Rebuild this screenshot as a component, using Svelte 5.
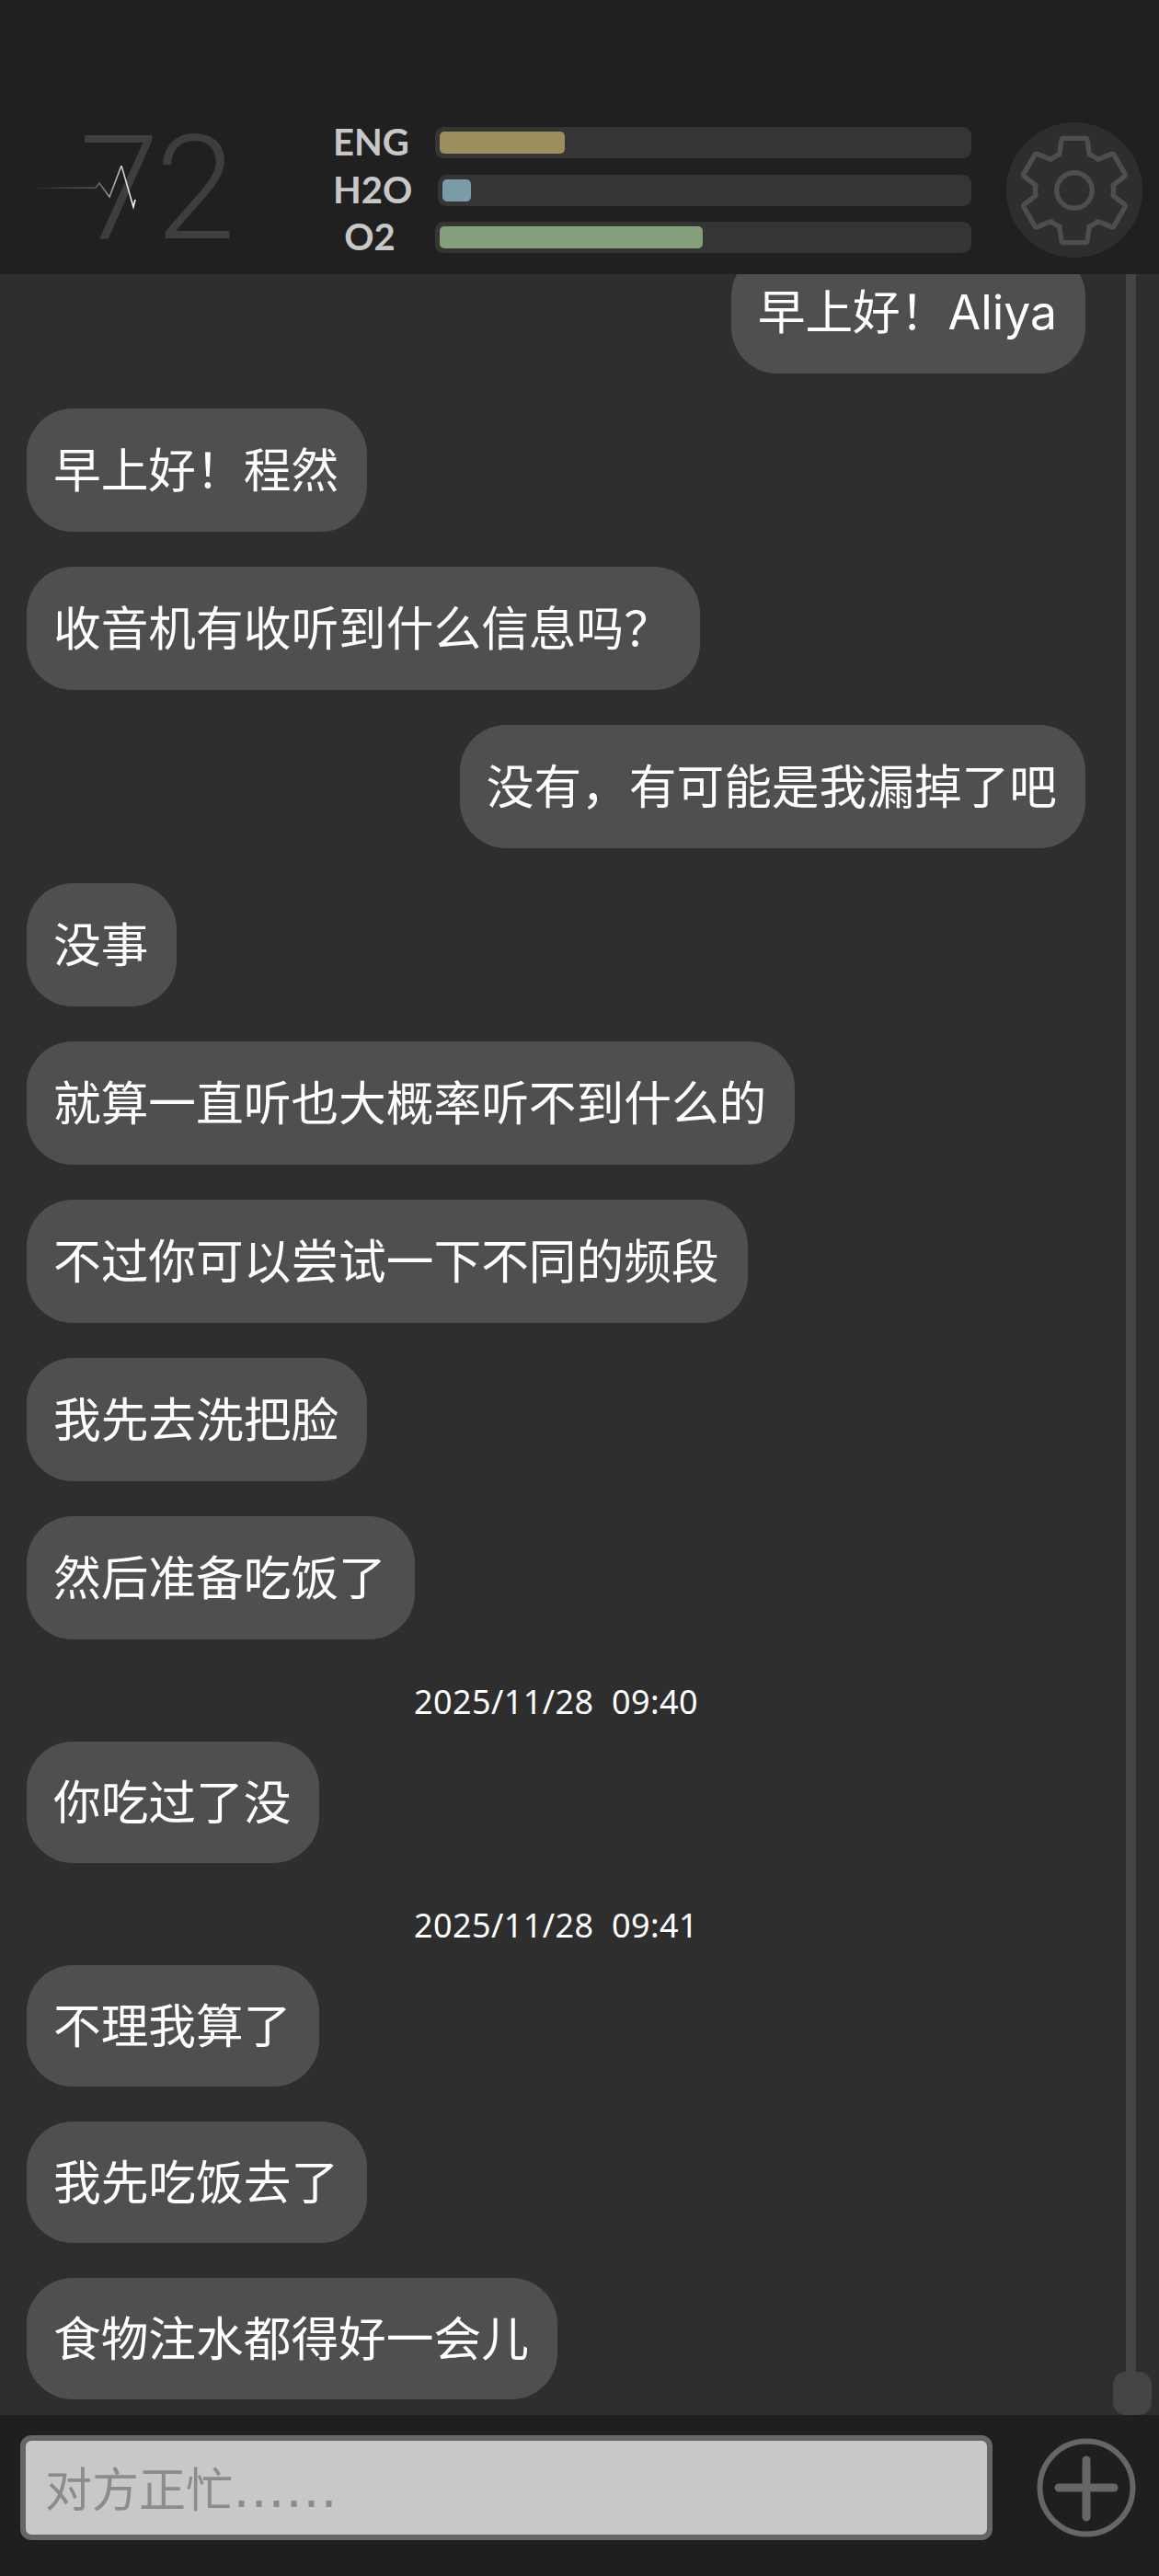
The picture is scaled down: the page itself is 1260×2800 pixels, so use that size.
<script>
  const stats = [
    { label: "ENG", value: 136, color: "#9c8d5c", mod: "" },
    { label: "H2O", value: 31, color: "#7a9ca8", mod: "water" },
    { label: "O2", value: 286, color: "#84a07a", mod: "" },
  ];

  const messages = [
    { text: "早上好！Aliya", mine: true },
    { text: "早上好！程然" },
    { text: "收音机有收听到什么信息吗？" },
    { text: "没有，有可能是我漏掉了吧", mine: true },
    { text: "没事" },
    { text: "就算一直听也大概率听不到什么的" },
    { text: "不过你可以尝试一下不同的频段" },
    { text: "我先去洗把脸" },
    { text: "然后准备吃饭了" },
    { time: "2025/11/28  09:40" },
    { text: "你吃过了没", late: true },
    { time: "2025/11/28  09:41" },
    { text: "不理我算了", late: true },
    { text: "我先吃饭去了", late: true },
    { text: "食物注水都得好一会儿", late: true },
  ];
</script>

<div class="app">
  <header class="top">
    <div class="pulse">
      <span class="rate">72</span>
      <svg class="wave" width="130" height="60" viewBox="0 0 130 60" fill="none">
        <defs>
          <linearGradient id="fade" gradientUnits="userSpaceOnUse" x1="0" y1="0" x2="115" y2="0">
            <stop offset="0" stop-color="#fff" stop-opacity="0" />
            <stop offset="0.65" stop-color="#fff" stop-opacity="0.3" />
            <stop offset="1" stop-color="#fff" />
          </linearGradient>
        </defs>
        <polyline
          points="0,24.5 72,24 76,19 87,34 100,0 113,45 115,37"
          stroke="url(#fade)"
          stroke-width="1.6"
          stroke-linejoin="miter"
        />
      </svg>
    </div>

    <div class="stats">
      {#each stats as s}
        <div class="stat {s.mod}">
          <span class="label">{s.label}</span>
          <div class="track">
            <div class="fill" style="width: {s.value}px; background: {s.color}"></div>
          </div>
        </div>
      {/each}
    </div>

    <button class="gear" aria-label="settings">
      <svg width="136" height="136" viewBox="0 0 24 24" fill="none" stroke="#4e4e4e" stroke-width="0.95">
        <path d="M19.43 12.98c.04-.32.07-.64.07-.98 0-.34-.03-.66-.07-.98l2.11-1.65c.19-.15.24-.42.12-.64l-2-3.46c-.12-.22-.39-.3-.61-.22l-2.49 1c-.52-.4-1.08-.73-1.69-.98l-.38-2.65C14.46 2.18 14.25 2 14 2h-4c-.25 0-.46.18-.49.42l-.38 2.65c-.61.25-1.17.59-1.69.98l-2.49-1c-.23-.09-.49 0-.61.22l-2 3.46c-.13.22-.07.49.12.64l2.11 1.65c-.04.32-.07.65-.07.98 0 .33.03.66.07.98l-2.11 1.65c-.19.15-.24.42-.12.64l2 3.46c.12.22.39.3.61.22l2.49-1c.52.4 1.08.73 1.69.98l.38 2.65c.03.24.24.42.49.42h4c.25 0 .46-.18.49-.42l.38-2.65c.61-.25 1.17-.59 1.69-.98l2.49 1c.23.09.49 0 .61-.22l2-3.46c.12-.22.07-.49-.12-.64l-2.11-1.65z" />
        <circle cx="12" cy="12" r="3.4" />
      </svg>
    </button>
  </header>

  <main class="chat">
    <div class="log">
      {#each messages as m}
        {#if m.time}
          <div class="time">{m.time}</div>
        {:else}
          <div class="bubble" class:mine={m.mine} class:late={m.late}>{m.text}</div>
        {/if}
      {/each}
    </div>
    <div class="rail"></div>
    <div class="thumb"></div>
  </main>

  <footer class="bottom">
    <div class="entry">对方正忙<span class="dots">……</span></div>
    <button class="add" aria-label="add">
      <svg width="108" height="108" viewBox="0 0 108 108" fill="none" stroke="#666" stroke-linecap="round">
        <circle cx="54" cy="54" r="50.5" stroke-width="6" />
        <path d="M54 24v62M24 54h60" stroke-width="9" />
      </svg>
    </button>
  </footer>
</div>

<style>
  :global(body) {
    background: #2e2e2e;
  }

  .app {
    height: 100vh;
    display: flex;
    flex-direction: column;
    font-family: "Inter", "Noto Sans CJK SC", sans-serif;
  }

  button {
    border: none;
    padding: 0;
    background: none;
  }

  /* Top status bar */
  .top {
    flex: none;
    height: 298px;
    box-sizing: border-box;
    padding: 133px 18px 18px 32px;
    background: #202020;
    display: flex;
  }

  .pulse {
    position: relative;
    width: 331px;
    flex: none;
  }

  .rate {
    display: block;
    margin: -23px 0 0 54px;
    font-family: "Roboto", sans-serif;
    font-weight: 350;
    font-size: 157px;
    letter-spacing: -4px;
    line-height: 190px;
    color: #3e3e3e;
  }

  .wave {
    position: absolute;
    left: 0;
    top: 47px;
  }

  .stats {
    flex: none;
    width: 693px;
    padding-top: 5px;
    display: flex;
    flex-direction: column;
    gap: 17.5px;
  }

  .stat {
    display: flex;
    align-items: center;
    height: 34px;
  }

  .label {
    flex: none;
    width: 80px;
    margin-right: 30px;
    position: relative;
    left: -1px;
    top: -1px;
    text-align: center;
    white-space: nowrap;
    font-family: "Lato", sans-serif;
    font-weight: 700;
    font-size: 40px;
    color: #c8c8c8;
  }

  .track {
    flex: 1;
    height: 34px;
    box-sizing: border-box;
    padding: 5px;
    border-radius: 9px;
    background: #353535;
  }

  .fill {
    height: 100%;
    border-radius: 5px;
  }

  .water .label {
    margin-right: 33px;
  }

  .gear {
    flex: none;
    margin-left: 38px;
    width: 148px;
    height: 147px;
    border-radius: 50%;
    background: #2e2e2e;
    display: flex;
    align-items: center;
    justify-content: center;
  }

  /* Messages */
  .chat {
    flex: 1;
    min-height: 0;
    position: relative;
    overflow: hidden;
    background: #2e2e2e;
  }

  .log {
    height: 100%;
    box-sizing: border-box;
    padding: 0 80px 17px 29px;
    display: flex;
    flex-direction: column;
    justify-content: flex-end;
    align-items: flex-start;
    gap: 38px;
  }

  .bubble {
    flex: none;
    box-sizing: border-box;
    height: 134px;
    line-height: 134px;
    padding: 0 31px 0 29px;
    border-radius: 50px;
    background: #4f4f4f;
    color: #fff;
    font-size: 51.7px;
    font-weight: 400;
    white-space: nowrap;
  }

  .bubble.mine {
    align-self: flex-end;
  }

  .bubble.late {
    height: 132px;
    line-height: 132px;
  }

  .time {
    flex: none;
    align-self: center;
    margin: 7px 0 -18px;
    color: #fff;
    font-family: "Noto Sans", sans-serif;
    font-size: 36px;
    letter-spacing: 0.4px;
    line-height: 46px;
    white-space: pre;
  }

  .rail {
    position: absolute;
    left: 1224px;
    top: 0;
    bottom: 0;
    width: 11px;
    background: #444;
  }

  .thumb {
    position: absolute;
    left: 1210px;
    bottom: 0;
    width: 42px;
    height: 47px;
    border-radius: 14px;
    background: #444;
  }

  /* Input row */
  .bottom {
    flex: none;
    height: 175px;
    box-sizing: border-box;
    padding: 22px 25px 39px 22px;
    background: #1f1f1f;
    display: flex;
    align-items: center;
    justify-content: space-between;
  }

  .entry {
    width: 1057px;
    height: 114px;
    box-sizing: border-box;
    padding: 2px 21px 0;
    border: 6px solid #666;
    border-radius: 12px;
    background: #c8c8c8;
    color: #8c8c8c;
    font-family: "Noto Sans CJK SC", sans-serif;
    font-size: 51px;
    line-height: 97px;
  }

  .dots {
    font-family: "DejaVu Sans", sans-serif;
    font-size: 57px;
  }

  .add {
    display: flex;
  }
</style>
